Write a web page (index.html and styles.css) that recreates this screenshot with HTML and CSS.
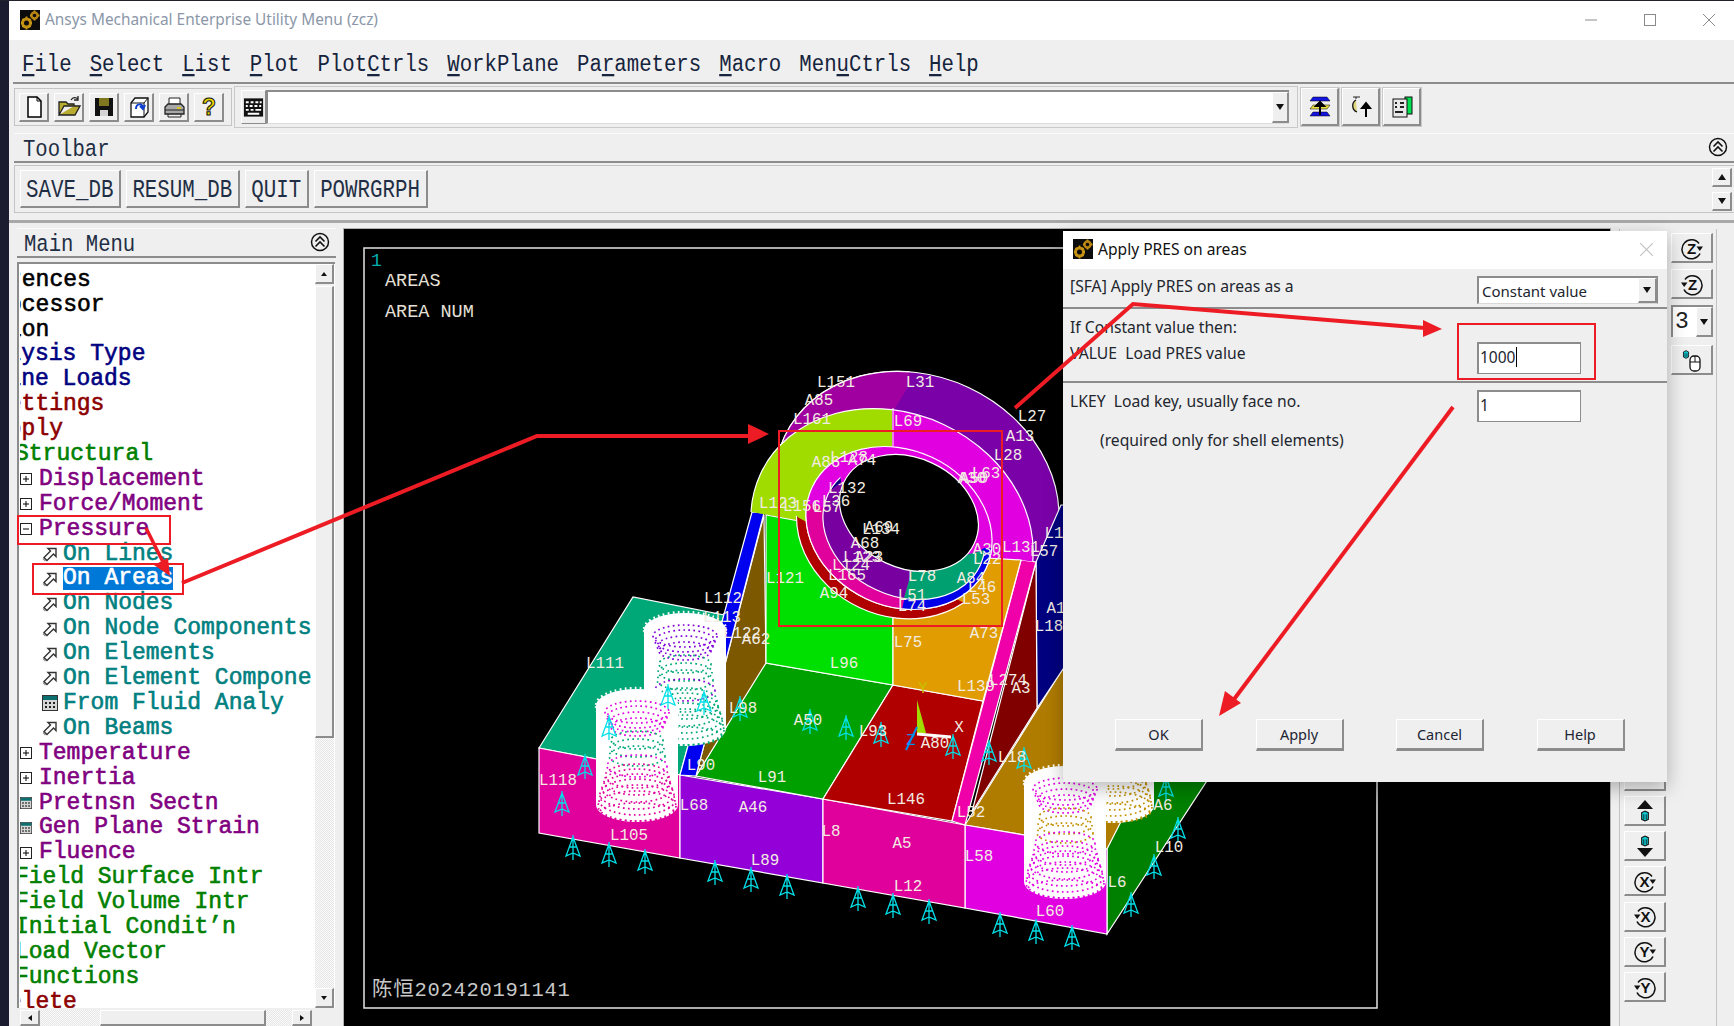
FILE: index.html
```html
<!DOCTYPE html>
<html lang="en">
<head>
<meta charset="utf-8">
<title>Ansys Mechanical Enterprise Utility Menu (zcz)</title>
<link rel="stylesheet" href="styles.css">
</head>
<body>
<svg class="defs" aria-hidden="true">
  <defs>
    <symbol id="gear" viewBox="0 0 20 20">
      <rect width="20" height="20" fill="#0c0c0c"/>
      <circle cx="6.500" cy="13" r="4" fill="none" stroke="#c08c10" stroke-width="3"/>
      <circle cx="14.500" cy="5.500" r="3" fill="none" stroke="#b88410" stroke-width="2.400"/>
      <path d="M6.500 6.500v2.500M6.500 17v2.500M1 13h2M10 13h2M2.500 9l1.500 1.500M9 15.500l1.500 1.500M2.500 17L4 15.500M9 10.500L10.500 9M14.500 0.500v1.500M14.500 9v1.500M10 5.500h1.500M18 5.500h1.500" stroke="#c89818" stroke-width="1.800"/>
    </symbol>
    <symbol id="collapse" viewBox="0 0 20 20">
      <circle cx="10" cy="10" r="8.500" fill="none" stroke="#111" stroke-width="1.500"/>
      <path d="M5.500 9.500L10 5l4.500 4.500M5.500 14.500L10 10l4.500 4.500" fill="none" stroke="#111" stroke-width="1.600"/>
    </symbol>
    <symbol id="plus" viewBox="0 0 12 12">
      <rect x="0.500" y="0.500" width="11" height="11" fill="#fff" stroke="#222"/>
      <path d="M3 6h6M6 3v6" stroke="#000"/>
    </symbol>
    <symbol id="minus" viewBox="0 0 12 12">
      <rect x="0.500" y="0.500" width="11" height="11" fill="#fff" stroke="#222"/>
      <path d="M3 6h6" stroke="#000"/>
    </symbol>
    <symbol id="arr" viewBox="0 0 16 16">
      <path d="M2 11.500L8.500 5L6 2.500H14V10.500L11.500 8L5 14.500Z" fill="#fff" stroke="#333" stroke-width="1.400"/>
      <path d="M1 12.500L3.500 15" stroke="#888" stroke-width="1.200"/>
    </symbol>
    <symbol id="form" viewBox="0 0 16 16">
      <rect x="0.500" y="0.500" width="15" height="15" fill="#d6d6d6" stroke="#333"/>
      <rect x="1" y="1" width="14" height="4" fill="#0d6e70"/>
      <path d="M3 8h2M7 8h2M11 8h2M3 12h2M7 12h2M11 12h2" stroke="#222" stroke-width="2"/>
    </symbol>
    <symbol id="ring-cw" viewBox="0 0 24 24">
      <path d="M19 7.500A9.500 9.500 0 1 0 20 17.500" fill="none" stroke="#111" stroke-width="1.500"/>
      <path d="M16.500 10.500H23L19.800 15Z" fill="#111"/>
    </symbol>
    <symbol id="ring-ccw" viewBox="0 0 24 24">
      <path d="M5 7.500A9.500 9.500 0 1 1 4 17.500" fill="none" stroke="#111" stroke-width="1.500"/>
      <path d="M7.500 10.500H1L4.200 15Z" fill="#111"/>
    </symbol>
    <symbol id="cube" viewBox="0 0 12 14">
      <path d="M2 3L6 1L10 3V11L6 13L2 11Z" fill="#10c8d0" stroke="#111" stroke-width="1.300"/>
      <path d="M4.500 5V11M7.500 5V11" stroke="#111"/>
    </symbol>
    <g id="cyl">
      <path class="cyl-body" d="M0 18A41 17 0 0 1 82 18V117A41 17 0 0 1 0 117Z"/>
      <ellipse class="ring-w" cx="41" cy="17" rx="41" ry="17"/>
      <ellipse class="ring-w" cx="41" cy="20" rx="41" ry="17"/>
      <ellipse class="ring-a" cx="41" cy="24" rx="32" ry="11"/>
      <ellipse class="ring-a" cx="41" cy="29" rx="30" ry="11"/>
      <ellipse class="ring-a" cx="41" cy="34" rx="28" ry="10"/>
      <ellipse class="ring-a" cx="41" cy="39" rx="26" ry="9"/>
      <ellipse class="ring-b" cx="41" cy="52" rx="26" ry="9"/>
      <ellipse class="ring-b" cx="41" cy="60" rx="27" ry="9"/>
      <ellipse class="ring-b" cx="41" cy="68" rx="28" ry="10"/>
      <ellipse class="ring-a" cx="41" cy="78" rx="30" ry="11"/>
      <ellipse class="ring-c" cx="41" cy="88" rx="32" ry="12"/>
      <ellipse class="ring-c" cx="41" cy="94" rx="33" ry="13"/>
      <ellipse class="ring-c" cx="41" cy="100" rx="35" ry="14"/>
      <ellipse class="ring-c" cx="41" cy="106" rx="37" ry="15"/>
      <ellipse class="ring-c" cx="41" cy="112" rx="38" ry="15"/>
      <ellipse class="ring-c" cx="41" cy="118" rx="39" ry="15"/>
      <ellipse class="ring-c" cx="41" cy="124" rx="37" ry="9"/>
    </g>
    <g id="prs">
      <path d="M0 -11L-7 8L0 5L7 8ZM0 -13V12M-3.500 -1L3.500 -1" class="prs-line"/>
    </g>
    <clipPath id="c-a85"><polygon points="700,340 912,340 910,385 895,410 700,600"/></clipPath>
    <clipPath id="c-lime"><polygon points="700,380 893,380 893,540 800,521 753,512 700,512"/></clipPath>
    <clipPath id="c-mag"><polygon points="893,380 1100,380 1100,562 1037,562 1022,560 987,558 893,540"/></clipPath>
    <clipPath id="c-red"><polygon points="780,500 800,518 975,608 1000,610 1000,660 780,660"/></clipPath>
    <clipPath id="c-pink"><polygon points="780,500 820,505 905,600 897,640 780,640"/></clipPath>
    <clipPath id="c-blue"><polygon points="905,600 897,640 1010,640 1010,550 985,548"/></clipPath>
    <clipPath id="c-purple"><polygon points="820,500 842,482 913,570 903,605 800,605"/></clipPath>
    <clipPath id="c-navy"><polygon points="815,500 820,500 842,482 840,465 815,465"/></clipPath>
    <clipPath id="c-teal"><polygon points="913,570 903,605 1000,620 985,550"/></clipPath>
  </defs>
</svg>

<div class="app">
  <div class="strip"></div>
  <div class="window">
    <header class="titlebar">
      <svg class="app-icon"><use href="#gear"/></svg>
      <span class="title-text">Ansys Mechanical Enterprise Utility Menu (zcz)</span>
      <span class="win-ctrls">
        <svg class="wc" viewBox="0 0 12 12"><path d="M0 6H12"/></svg>
        <svg class="wc" viewBox="0 0 12 12"><rect x="0.500" y="0.500" width="11" height="11"/></svg>
        <svg class="wc" viewBox="0 0 12 12"><path d="M0 0L12 12M12 0L0 12"/></svg>
      </span>
    </header>

    <nav class="menubar mono">
      <span><u>F</u>ile</span><span><u>S</u>elect</span><span><u>L</u>ist</span><span><u>P</u>lot</span><span>Plot<u>C</u>trls</span><span><u>W</u>orkPlane</span><span>Pa<u>r</u>ameters</span><span><u>M</u>acro</span><span>Men<u>u</u>Ctrls</span><span><u>H</u>elp</span>
    </nav>

    <div class="toolrow">
      <div class="toolgroup">
        <button class="tbtn"><svg class="ico" viewBox="0 0 24 24"><path d="M6 2H15L19 6V22H6Z" fill="#fff" stroke="#000" stroke-width="1.500"/><path d="M15 2V6H19" fill="none" stroke="#000"/></svg></button>
        <button class="tbtn"><svg class="ico" viewBox="0 0 24 24"><path d="M2 20V7H9L11 9H17V11H7L2 20H18L23 11H17" fill="#b8ac30" stroke="#222" stroke-width="1.300"/><path d="M14 5C16 2 19 2 21 4M21 1V5H17" fill="none" stroke="#222" stroke-width="1.300"/></svg></button>
        <button class="tbtn"><svg class="ico" viewBox="0 0 24 24"><rect x="3" y="3" width="18" height="18" fill="#111"/><rect x="7" y="3" width="10" height="8" fill="#807820"/><rect x="8" y="15" width="8" height="6" fill="#d4d4d4"/></svg></button>
        <button class="tbtn"><svg class="ico" viewBox="0 0 24 24"><path d="M4 8L8 3H21V17L17 22H4Z" fill="#fff" stroke="#111" stroke-width="1.300"/><path d="M4 8H17V22M17 8L21 3" fill="none" stroke="#111"/><path d="M9 14C9 8 16 8 16 13M13 11L16 14L18 10" fill="none" stroke="#1040d0" stroke-width="2"/></svg></button>
        <button class="tbtn"><svg class="ico" viewBox="0 0 24 24"><path d="M7 3H18V10H7Z" fill="#fff" stroke="#222"/><path d="M3 12L6 9H19L22 12V19H3Z" fill="#a8a8a8" stroke="#222" stroke-width="1.300"/><path d="M3 15H22M6 19V22H19V19" fill="none" stroke="#222"/><rect x="15" y="12" width="4" height="2" fill="#d8c820"/></svg></button>
        <button class="tbtn"><svg class="ico" viewBox="0 0 24 24"><text class="q-mark" x="12" y="20">?</text></svg></button>
      </div>
      <div class="cmdgroup">
        <div class="kbd"><svg class="ico" viewBox="0 0 24 24"><rect x="2" y="3" width="20" height="19" fill="#111"/><path d="M4 7h3M9 7h3M14 7h3M18.500 7h2M4 11h2M8 11h3M13 11h3M18 11h2M4 15h3M9 15h3M14 15h6M6 19h12" stroke="#fff" stroke-width="2"/></svg></div>
        <div class="cmd-input"><span class="drop"><i class="tri-d"></i></span></div>
      </div>
      <button class="tbtn wide"><svg class="ico" viewBox="0 0 24 24"><path d="M5 2H19L22 6H2Z" fill="#1414e0" stroke="#000" stroke-width="0.500"/><path d="M5 10H22L19 14H2Z" fill="#e8e040" stroke="#000" stroke-width="0.500"/><path d="M5 17H19L22 21H2Z" fill="#1414e0" stroke="#000" stroke-width="0.500"/><path d="M12 7V20M8 11L12 7L16 11H8Z" fill="#000" stroke="#000" stroke-width="2"/></svg></button>
      <button class="tbtn wide"><svg class="ico" viewBox="0 0 24 24"><path d="M4 2H11M7 2V4" stroke="#222"/><path d="M7 5C2 8 3 15 8 17" fill="#e0d880" stroke="#111" stroke-width="1.300"/><path d="M17 22V9M13 13L17 8L21 13Z" fill="#000" stroke="#000" stroke-width="2"/></svg></button>
      <button class="tbtn wide"><svg class="ico" viewBox="0 0 24 24"><rect x="15" y="2" width="7" height="17" fill="#00e050" stroke="#111"/><rect x="3" y="4" width="14" height="18" fill="#e8e8e8" stroke="#111"/><path d="M5 8h2M10 8h4M5 12h2M10 12h4M5 17h8" stroke="#222" stroke-width="2"/></svg></button>
    </div>

    <div class="bar-title">
      <span class="mono bar-label">Toolbar</span>
      <svg class="col-ic"><use href="#collapse"/></svg>
    </div>
    <div class="abbr-row">
      <button class="abbr mono"><span>SAVE_DB</span></button>
      <button class="abbr mono"><span>RESUM_DB</span></button>
      <button class="abbr mono"><span>QUIT</span></button>
      <button class="abbr mono"><span>POWRGRPH</span></button>
      <span class="abbr-scroll">
        <span class="mini"><i class="tri-u"></i></span>
        <span class="mini"><i class="tri-d"></i></span>
      </span>
    </div>

    <main class="work">
      <aside class="left">
        <div class="left-head">
          <span class="mono bar-label">Main Menu</span>
          <svg class="col-ic"><use href="#collapse"/></svg>
        </div>
        <div class="treebox">
          <div class="tree mono">
            <div class="row l0 k">Preferences</div>
            <div class="row l0 k">Preprocessor</div>
            <div class="row l0 k">Solution</div>
            <div class="row l1 n">Analysis Type</div>
            <div class="row l1 n">Define Loads</div>
            <div class="row l2 r">Settings</div>
            <div class="row l2 r">Apply</div>
            <div class="row l3 g">Structural</div>
            <div class="row l4 p"><svg class="box"><use href="#plus"/></svg>Displacement</div>
            <div class="row l4 p"><svg class="box"><use href="#plus"/></svg>Force/Moment</div>
            <div class="row l4 p"><svg class="box"><use href="#minus"/></svg>Pressure</div>
            <div class="row l5 t"><svg class="arr"><use href="#arr"/></svg>On Lines</div>
            <div class="row l5 t"><svg class="arr"><use href="#arr"/></svg><span class="sel">On Areas</span></div>
            <div class="row l5 t"><svg class="arr"><use href="#arr"/></svg>On Nodes</div>
            <div class="row l5 t"><svg class="arr"><use href="#arr"/></svg>On Node Components</div>
            <div class="row l5 t"><svg class="arr"><use href="#arr"/></svg>On Elements</div>
            <div class="row l5 t"><svg class="arr"><use href="#arr"/></svg>On Element Components</div>
            <div class="row l5 t"><svg class="arr"><use href="#form"/></svg>From Fluid Analy</div>
            <div class="row l5 t"><svg class="arr"><use href="#arr"/></svg>On Beams</div>
            <div class="row l4 p"><svg class="box"><use href="#plus"/></svg>Temperature</div>
            <div class="row l4 p"><svg class="box"><use href="#plus"/></svg>Inertia</div>
            <div class="row l4 p"><svg class="box"><use href="#form"/></svg>Pretnsn Sectn</div>
            <div class="row l4 p"><svg class="box"><use href="#form"/></svg>Gen Plane Strain</div>
            <div class="row l4 p"><svg class="box"><use href="#plus"/></svg>Fluence</div>
            <div class="row l3 g">Field Surface Intr</div>
            <div class="row l3 g">Field Volume Intr</div>
            <div class="row l3 g">Initial Condit’n</div>
            <div class="row l3 g">Load Vector</div>
            <div class="row l3 g">Functions</div>
            <div class="row l2 r">Delete</div>
          </div>
          <div class="vscroll">
            <span class="sb-btn"><i class="tri-u small"></i></span>
            <span class="sb-thumb-v"></span>
            <span class="sb-track"></span>
            <span class="sb-btn"><i class="tri-d small"></i></span>
          </div>
        </div>
        <div class="hscroll">
          <span class="sb-btn h"><i class="tri-l"></i></span>
          <span class="sb-track h-a"></span>
          <span class="sb-thumb-h"></span>
          <span class="sb-track h-b"></span>
          <span class="sb-btn h"><i class="tri-r"></i></span>
        </div>
      </aside>

      <section class="gfx">
        <svg class="plot" viewBox="345 229 1266 797">
          <rect x="365" y="248" width="1013" height="760" class="frame"/>
          <text class="t-one" x="372" y="266">1</text>
          <text class="t-head" x="386" y="286">AREAS</text>
          <text class="t-head" x="386" y="317">AREA NUM</text>
          <text class="t-sig" x="373" y="996">陈恒202420191141</text>

          <g class="edge">
            <polygon fill="#b07c00" points="966,825 1063,670 1210,700 1108,849"/>
            <polygon fill="#008000" points="1108,849 1108,934 1215,770 1215,640"/>
            <polygon fill="#e000e0" points="966,825 1108,849 1108,934 966,908"/>
            <polygon fill="#00a878" points="540,748 634,597 725,615 681,775"/>
            <polygon fill="#e0009c" points="540,748 681,775 681,858 540,833"/>
            <polygon fill="#9400d8" points="681,775 824,799 824,883 681,858"/>
            <polygon fill="#e0009c" points="824,799 966,825 966,908 824,883"/>
            <polygon fill="#00a000" points="766,663 894,685 824,799 697,776"/>
            <polygon fill="#b00000" points="894,685 984,701 953,821 824,799"/>
            <polygon fill="#7c5800" points="765,515 767,663 697,776"/>
            <polygon fill="#0000f0" points="681,775 697,776 765,513 753,512"/>

            <ellipse fill="#7a00a8" cx="918" cy="498" rx="146" ry="122" transform="rotate(25 918 498)"/>
            <g clip-path="url(#c-a85)"><ellipse fill="#a000a0" cx="918" cy="498" rx="146" ry="122" transform="rotate(25 918 498)"/></g>
            <polygon fill="#000080" points="1037,562 1062,505 1070,505 1070,660 1038,708"/>
            <polygon fill="#800000" points="1037,562 1038,708 973,812"/>
            <polygon fill="#f000a8" points="953,821 966,825 1037,562 1022,560"/>
            <g clip-path="url(#c-lime)"><ellipse fill="#a0dc00" cx="893" cy="535" rx="145" ry="122" transform="rotate(25 893 535)"/></g>
            <g clip-path="url(#c-mag)"><ellipse fill="#e000e0" cx="893" cy="535" rx="145" ry="122" transform="rotate(25 893 535)"/></g>
            <polygon fill="#00e000" points="767,515 800,521 894,560 894,685 767,663"/>
            <polygon fill="#e09c00" points="894,560 987,558 1022,560 984,701 894,685"/>
            <path d="M894 408V540" stroke="#fff"/>

            <g clip-path="url(#c-red)"><ellipse fill="#b00000" cx="898" cy="528" rx="103" ry="88" transform="rotate(25 898 528)"/></g>
            <ellipse fill="#e000e0" cx="900" cy="528" rx="96" ry="78" transform="rotate(25 900 528)"/>
            <g clip-path="url(#c-pink)"><ellipse fill="#e0009c" cx="900" cy="528" rx="96" ry="78" transform="rotate(25 900 528)"/></g>
            <g clip-path="url(#c-blue)"><ellipse fill="#0000e8" cx="900" cy="528" rx="96" ry="78" transform="rotate(25 900 528)"/></g>
            <g clip-path="url(#c-purple)"><ellipse fill="#7800a0" cx="905" cy="530" rx="84" ry="66" transform="rotate(25 905 530)"/></g>
            <g clip-path="url(#c-navy)"><ellipse fill="#000080" cx="905" cy="530" rx="84" ry="66" transform="rotate(25 905 530)"/></g>
            <g clip-path="url(#c-teal)"><ellipse fill="#00a070" cx="905" cy="530" rx="84" ry="66" transform="rotate(25 905 530)"/></g>
            <ellipse fill="#000" cx="910" cy="513" rx="72" ry="55" transform="rotate(25 910 513)"/>
          </g>

          <use href="#cyl" x="645" y="612" class="cy1"/>
          <use href="#cyl" x="597" y="688" class="cy2"/>
          <use href="#cyl" x="1073" y="689" class="cy4"/>
          <use href="#cyl" x="1025" y="765" class="cy3"/>

          <g class="triad">
            <polygon fill="#a0dc00" points="918,700 918,733 927,733"/>
            <path d="M918 734L952 737" stroke="#fff" stroke-width="3"/>
            <path d="M918 727L907 750" stroke="#0090f0" stroke-width="2"/>
          </g>
          <text class="lb yl" x="924" y="693">Y</text>
          <text class="lb" x="960" y="732">X</text>
          <text class="lb bl" x="912" y="745">Z</text>

          <g class="pr">
            <use href="#prs" x="574" y="848"/><use href="#prs" x="610" y="855"/><use href="#prs" x="646" y="862"/>
            <use href="#prs" x="716" y="873"/><use href="#prs" x="752" y="880"/><use href="#prs" x="788" y="887"/>
            <use href="#prs" x="859" y="899"/><use href="#prs" x="894" y="906"/><use href="#prs" x="930" y="912"/>
            <use href="#prs" x="1001" y="925"/><use href="#prs" x="1037" y="932"/><use href="#prs" x="1073" y="938"/>
            <use href="#prs" x="1132" y="905"/><use href="#prs" x="1155" y="867"/><use href="#prs" x="1179" y="830"/><use href="#prs" x="1167" y="788"/>
            <use href="#prs" x="586" y="767"/><use href="#prs" x="563" y="804"/><use href="#prs" x="610" y="728"/><use href="#prs" x="669" y="697"/><use href="#prs" x="705" y="703"/><use href="#prs" x="741" y="709"/>
            <use href="#prs" x="811" y="722"/><use href="#prs" x="847" y="728"/><use href="#prs" x="882" y="735"/><use href="#prs" x="954" y="747"/><use href="#prs" x="990" y="753"/><use href="#prs" x="1025" y="760"/>
          </g>

          <g class="lbs">
            <text x="837" y="387">L151</text><text x="921" y="387">L31</text><text x="820" y="405">A85</text><text x="813" y="424">L161</text>
            <text x="909" y="426">L69</text><text x="1033" y="421">L27</text><text x="1021" y="441">A13</text><text x="1009" y="460">L28</text>
            <text x="827" y="467">A86</text><text x="850" y="462">L128</text><text x="863" y="465">A74</text><text x="987" y="478">L63</text>
            <text x="973" y="483">A30</text><text x="975" y="483">A50</text><text x="848" y="493">L132</text><text x="779" y="508">L123</text>
            <text x="803" y="511">L156</text><text x="828" y="512">L57</text><text x="837" y="506">L36</text><text x="880" y="532">A69</text>
            <text x="882" y="534">L134</text><text x="866" y="548">A68</text><text x="863" y="562">L123</text><text x="870" y="562">A23</text>
            <text x="852" y="570">L124</text><text x="786" y="583">L121</text><text x="923" y="581">L78</text><text x="848" y="580">L165</text>
            <text x="835" y="598">A94</text><text x="913" y="600">L51</text><text x="913" y="611">L74</text><text x="977" y="604">L53</text>
            <text x="983" y="592">L46</text><text x="972" y="583">A84</text><text x="988" y="554">A30</text><text x="1022" y="552">L131</text>
            <text x="1045" y="556">L57</text><text x="988" y="564">L22</text><text x="985" y="638">A73</text><text x="909" y="647">L75</text>
            <text x="1050" y="631">L18</text><text x="1057" y="613">A1</text><text x="1055" y="538">L1</text><text x="724" y="603">L112</text>
            <text x="723" y="622">L113</text><text x="743" y="638">L122</text><text x="757" y="644">A62</text><text x="606" y="668">L111</text>
            <text x="845" y="668">L96</text><text x="744" y="713">L98</text><text x="809" y="725">A50</text><text x="874" y="736">L93</text>
            <text x="977" y="691">L139</text><text x="1009" y="685">L274</text><text x="1022" y="693">A3</text><text x="936" y="748">A80</text>
            <text x="1013" y="762">L18</text><text x="702" y="770">L90</text><text x="773" y="782">L91</text><text x="559" y="785">L118</text>
            <text x="695" y="810">L68</text><text x="754" y="812">A46</text><text x="907" y="804">L146</text><text x="972" y="817">L52</text>
            <text x="832" y="836">L8</text><text x="980" y="861">L58</text><text x="630" y="840">L105</text><text x="903" y="848">A5</text>
            <text x="766" y="865">L89</text><text x="909" y="891">L12</text><text x="1051" y="916">L60</text><text x="1118" y="887">L6</text>
            <text x="1170" y="852">L10</text><text x="1164" y="810">A6</text>
          </g>
        </svg>
      </section>

      <aside class="side">
        <div class="side-col a">
          <button class="sbtn"><svg class="sico" viewBox="0 0 24 24"><use href="#cube" x="6" y="1" width="12" height="14"/></svg></button>
          <button class="sbtn"><svg class="sico" viewBox="0 0 24 24"><path d="M12 1L20 10H4Z" fill="#111"/><use href="#cube" x="7" y="11" width="10" height="12"/></svg></button>
          <button class="sbtn"><svg class="sico" viewBox="0 0 24 24"><use href="#cube" x="7" y="1" width="10" height="12"/><path d="M12 23L20 14H4Z" fill="#111"/></svg></button>
          <button class="sbtn"><svg class="sico" viewBox="0 0 24 24"><use href="#ring-cw"/><text class="rl" x="11.500" y="17.500">X</text></svg></button>
          <button class="sbtn"><svg class="sico" viewBox="0 0 24 24"><use href="#ring-ccw"/><text class="rl" x="12.500" y="17.500">X</text></svg></button>
          <button class="sbtn"><svg class="sico" viewBox="0 0 24 24"><use href="#ring-cw"/><text class="rl" x="11.500" y="17.500">Y</text></svg></button>
          <button class="sbtn"><svg class="sico" viewBox="0 0 24 24"><use href="#ring-ccw"/><text class="rl" x="12.500" y="17.500">Y</text></svg></button>
        </div>
        <div class="side-col b">
          <button class="sbtn"><svg class="sico" viewBox="0 0 24 24"><use href="#ring-cw"/><text class="rl" x="11.500" y="17.500">Z</text></svg></button>
          <button class="sbtn"><svg class="sico" viewBox="0 0 24 24"><use href="#ring-ccw"/><text class="rl" x="12.500" y="17.500">Z</text></svg></button>
          <div class="rate"><span class="rate-val mono">3</span><span class="rate-drop"><i class="tri-d"></i></span></div>
          <button class="sbtn"><svg class="sico" viewBox="0 0 24 24"><use href="#cube" x="2" y="2" width="8" height="9"/><rect x="10" y="8" width="10" height="15" rx="4" fill="#fff" stroke="#111" stroke-width="1.300"/><path d="M10 14H20M15 8V14" stroke="#111"/></svg></button>
        </div>
      </aside>
    </main>
  </div>

  <div class="dialog">
    <div class="dlg-title">
      <svg class="dlg-icon"><use href="#gear"/></svg>
      <span>Apply PRES on areas</span>
      <svg class="dlg-close" viewBox="0 0 12 12"><path d="M0 0L12 12M12 0L0 12"/></svg>
    </div>
    <div class="dlg-sec s1">
      <div class="dl-label top">[SFA] Apply PRES on areas as a</div>
      <div class="combo"><span class="combo-text">Constant value</span><span class="drop c"><i class="tri-d"></i></span></div>
    </div>
    <div class="dlg-sec s2">
      <div class="s2-text">
        <div class="dl-label">If Constant value then:</div>
        <div class="dl-label v">VALUE&nbsp; Load PRES value</div>
      </div>
      <div class="field f-val"><span class="caret">1000</span></div>
    </div>
    <div class="dlg-sec s3">
      <div class="s3-text">
        <div class="dl-label">LKEY&nbsp; Load key, usually face no.</div>
        <div class="dl-label note">(required only for shell elements)</div>
      </div>
      <div class="field f-key">1</div>
    </div>
    <div class="dlg-btns">
      <button class="dbtn">OK</button>
      <button class="dbtn">Apply</button>
      <button class="dbtn">Cancel</button>
      <button class="dbtn">Help</button>
    </div>
  </div>

  <svg class="marks" viewBox="0 0 1734 1026">
    <rect x="18" y="516" width="152" height="28"/>
    <rect x="33" y="564" width="150" height="30"/>
    <rect x="779" y="431" width="223" height="195"/>
    <rect x="1458" y="324" width="137" height="55"/>
    <path d="M146 528L165 566"/>
    <polygon points="170,576 154,565 168,558"/>
    <path class="th" d="M182 583L537 436H750"/>
    <polygon points="769,434 748,424 748,444"/>
    <path class="th" d="M1015 408L1133 304L1425 328"/>
    <polygon points="1442,329 1423,320 1423,337"/>
    <path class="th" d="M1453 407L1232 702"/>
    <polygon points="1219,716 1225,691 1241,703"/>
  </svg>
</div>
</body>
</html>
```

FILE: styles.css
```css
* { box-sizing: border-box; }
html, body { margin: 0; padding: 0; height: 100%; overflow: hidden; }
body { font-family: "Noto Sans", "Liberation Sans", sans-serif; background: #1b1c30; }
.defs { position: absolute; width: 0; height: 0; }
.mono { font-family: "Liberation Mono", "Noto Sans CJK SC", monospace; }
button { font: inherit; margin: 0; padding: 0; color: inherit; }

.app { position: relative; width: 1734px; height: 1026px; display: flex; overflow: hidden; padding-top: 1px; background: #22222e; }
.strip { width: 9px; flex: none; background: #1b1c30; }
.window { flex: 1; display: flex; flex-direction: column; background: #efefef; min-width: 0; }

.titlebar { height: 39px; flex: none; background: #fff; display: flex; align-items: center; padding: 0 0 2px 11px; }
.app-icon { width: 20px; height: 20px; flex: none; margin-right: 5px; }
.title-text { font-size: 15.400px; color: #8b97a8; white-space: nowrap; }
.win-ctrls { margin-left: auto; display: flex; gap: 47px; padding-right: 19px; align-items: center; }
.wc { width: 12px; height: 12px; fill: none; stroke: #8a8a8a; stroke-width: 1; }

.menubar { height: 44px; flex: none; margin-left: 4px; display: flex; align-items: center; gap: 18px; padding: 6px 0 0 9px; font-size: 20.700px; color: #16233c; border-bottom: 2px solid #8c8c8c; white-space: nowrap; }
.menubar span { transform: scaleY(1.12); }
.menubar u { text-underline-offset: 3px; text-decoration-thickness: 2px; }

.toolrow { height: 46px; flex: none; display: flex; align-items: center; padding-left: 5px; }
.toolgroup { display: flex; gap: 5px; height: 38px; padding: 4px 4px; border: 1px solid #c4c4c4; width: 218px; }
.tbtn { width: 30px; height: 29px; flex: none; display: flex; align-items: center; justify-content: center; background: #efefef; border: 1px solid; border-color: #fff #8c8c8c #8c8c8c #fff; border-width: 1px 2px 2px 1px; }
.tbtn.wide { width: 38px; height: 38px; margin-right: 3px; outline: 1px solid #c9c9c9; }
.ico { width: 24px; height: 24px; }
.q-mark { font: 700 23px "Liberation Sans", sans-serif; fill: #e8d800; stroke: #111; stroke-width: 1; text-anchor: middle; }
.cmdgroup { display: flex; margin-left: 2px; margin-right: 3px; width: 1064px; height: 42px; padding: 3px 8px 3px 6px; border: 1px solid #c9c9c9; }
.kbd { width: 25px; display: flex; align-items: center; justify-content: center; border: 1px solid; border-color: #fff #8c8c8c #8c8c8c #fff; }
.cmd-input { flex: 1; display: flex; justify-content: flex-end; background: #fff; border-top: 2px solid #8c8c8c; border-left: 2px solid #8c8c8c; border-bottom: 1px solid #ddd; }
.drop { width: 17px; display: flex; align-items: center; justify-content: center; background: #efefef; border: 1px solid; border-color: #fff #8c8c8c #8c8c8c #fff; border-width: 1px 2px 2px 1px; }

.tri-d, .tri-u, .tri-l, .tri-r { display: block; width: 0; height: 0; border-style: solid; border-color: transparent; }
.tri-d { border-width: 6px 4.500px 0; border-top-color: #111; }
.tri-u { border-width: 0 4.500px 6px; border-bottom-color: #111; }
.tri-d.small { border-width: 4px 3.500px 0; border-top-color: #111; }
.tri-u.small { border-width: 0 3.500px 4px; border-bottom-color: #111; }
.tri-l { border-width: 3.500px 4px 3.500px 0; border-right-color: #111; }
.tri-r { border-width: 3.500px 0 3.500px 4px; border-left-color: #111; }

.bar-title { height: 30px; flex: none; margin: 3px 0 0 5px; display: flex; align-items: center; justify-content: space-between; padding: 3px 6px 0 9px; border-bottom: 2px solid #8c8c8c; border-top: 1px solid #fafafa; }
.bar-title .col-ic { margin-top: -5px; }
.bar-label { font-size: 20.600px; color: #1f2e44; white-space: nowrap; transform: scaleY(1.18); display: inline-block; }
.col-ic { width: 20px; height: 20px; flex: none; }
.abbr-row { height: 48px; flex: none; margin: 2px 0 0 5px; display: flex; align-items: center; gap: 5px; padding: 0 2px 0 5px; border: 1px solid #c4c4c4; border-right: 0; }
.abbr { height: 38px; padding: 3px 6px 0 5px; font-size: 20.800px; color: #1f2e44; background: #efefef; border: 1px solid; border-color: #fff #8c8c8c #8c8c8c #fff; border-width: 1px 2px 2px 1px; white-space: nowrap; }
.abbr span { display: inline-block; transform: scaleY(1.25); }
.abbr-scroll { margin-left: auto; display: flex; flex-direction: column; gap: 5px; }
.mini { width: 20px; height: 19px; display: flex; align-items: center; justify-content: center; background: #efefef; border: 1px solid; border-color: #fff #8c8c8c #8c8c8c #fff; border-width: 1px 2px 2px 1px; }

.work { flex: 1; min-height: 0; margin-top: 7px; border-top: 3px solid #a8a8a8; display: flex; padding-left: 6px; padding-top: 7px; }
.left { width: 325px; flex: none; display: flex; flex-direction: column; padding-left: 2px; margin-top: -2px; }
.left-head { height: 30px; flex: none; display: flex; align-items: center; justify-content: space-between; padding: 4px 6px 0 7px; border-bottom: 2px solid #8c8c8c; border-top: 1px solid #fafafa; width: 319px; }
.left-head .col-ic { margin-top: -6px; }
.treebox { height: 746px; flex: none; margin-top: 4px; width: 318px; display: flex; gap: 4px; background: #fff; border-top: 2px solid #8c8c8c; border-left: 2px solid #8c8c8c; padding-left: 1px; }
.tree { width: 291px; flex: none; overflow: hidden; padding-top: 3.800px; font-size: 23px; font-weight: 400; -webkit-text-stroke: 0.600px currentColor; }
.row { height: 24.900px; line-height: 24.900px; white-space: nowrap; display: flex; align-items: center; }
.l0 { margin-left: -81px; }
.l1 { margin-left: -54px; }
.l2 { margin-left: -26px; }
.l3 { margin-left: -5px; }
.l4 { margin-left: 0; }
.l5 { margin-left: 22px; }
.k { color: #000; }
.n { color: #000080; }
.r { color: #8c0000; }
.g { color: #008000; }
.p { color: #800080; }
.t { color: #008080; }
.sel { background: #0078d7; color: #fff; line-height: 23px; }
.box { width: 12px; height: 12px; margin-right: 7px; flex: none; }
.arr { width: 16px; height: 16px; margin-right: 5px; flex: none; }
.vscroll { width: 19px; flex: none; display: flex; flex-direction: column; background: #efefef; }
.sb-btn { height: 20px; flex: none; display: flex; align-items: center; justify-content: center; background: #efefef; border: 1px solid; border-color: #fff #8c8c8c #8c8c8c #fff; border-width: 1px 2px 2px 1px; }
.sb-btn.h { height: 16px; width: 20px; }
.sb-thumb-v { height: 452px; flex: none; margin-top: 2px; background: #efefef; border: 1px solid; border-color: #fff #8c8c8c #8c8c8c #fff; border-width: 1px 2px 2px 1px; }
.sb-track { flex: 1; background: repeating-conic-gradient(#e6e6e6 0 25%, #fafafa 0 50%) 0 0 / 2px 2px; }
.hscroll { height: 16px; flex: none; margin: 2px 0 0 3px; width: 291px; display: flex; }
.sb-track.h-a { flex: none; width: 60px; }
.sb-track.h-b { flex: none; width: 26px; }
.sb-thumb-h { width: 166px; flex: none; background: #efefef; border: 1px solid; border-color: #fff #8c8c8c #8c8c8c #fff; border-width: 1px 2px 2px 1px; }

.gfx { width: 1266px; flex: none; margin-left: 4px; margin-top: -1px; background: #000; outline: 1px solid #b0b0b0; }
.plot { display: block; width: 1266px; height: 797px; }
.frame { fill: none; stroke: #e4e4e4; stroke-width: 1.500; }
.t-one { font: 18px "Liberation Mono", monospace; fill: #00b0b0; }
.t-head { font: 18.500px "Liberation Mono", monospace; fill: #e6e0d8; }
.t-sig { font: 20.500px "Liberation Mono", "Noto Sans CJK SC", monospace; fill: #c8c8c8; letter-spacing: 0.700px; }
.edge polygon, .edge ellipse { stroke: #fff; stroke-width: 1.200; }
.cyl-body { fill: #fff; }
.ring-w, .ring-a, .ring-b, .ring-c { fill: none; stroke-width: 1.700; stroke-dasharray: 1.700 3.300; }
.ring-w { stroke: #ffffff; stroke-width: 2.400; }
.ring-a { stroke: var(--a); }
.ring-b { stroke: var(--b); }
.ring-c { stroke: var(--c); }
.cy1 { --a: #8000d8; --b: #00a878; --c: #00a878; }
.cy2 { --a: #e000e0; --b: #00a878; --c: #e0009c; }
.cy3 { --a: #e000e0; --b: #c09000; --c: #e000e0; }
.cy4 { --a: #c09000; --b: #c09000; --c: #c09000; }
.prs-line { fill: none; stroke: #00e0e8; stroke-width: 1.300; }
.lbs text, .lb { font: 15.800px "Liberation Mono", monospace; fill: #f2ece2; text-anchor: middle; }
.lb.yl { fill: #c8c000; }
.lb.bl { fill: #0090f0; }

.side { width: 98px; flex: none; margin-left: 9px; margin-top: -1px; display: flex; gap: 5px; border: 1px solid #c4c4c4; border-width: 0 1px 0 1px; padding-left: 4px; }
.side-col { width: 42px; flex: none; display: flex; flex-direction: column; gap: 5.200px; }
.side-col.a { justify-content: flex-end; padding-bottom: 24px; }
.side-col.b { padding-top: 4px; gap: 6px; }
.sbtn { width: 42px; height: 30px; flex: none; display: flex; align-items: center; justify-content: center; background: #efefef; border: 1px solid; border-color: #fff #8c8c8c #8c8c8c #fff; border-width: 1px 2px 2px 1px; }
.sico { width: 24px; height: 24px; }
.rl { font: 700 15px "Liberation Sans", sans-serif; fill: #111; text-anchor: middle; }
.rate { width: 42px; height: 32px; flex: none; display: flex; background: #fff; border-top: 2px solid #8c8c8c; border-left: 2px solid #8c8c8c; margin-bottom: 2px; }
.rate-val { flex: 1; font-size: 23px; line-height: 30px; padding-left: 2px; color: #222; }
.rate-drop { width: 17px; display: flex; align-items: center; justify-content: center; background: #efefef; border: 1px solid; border-color: #fff #8c8c8c #8c8c8c #fff; border-width: 1px 2px 2px 1px; }

.dialog { position: absolute; left: 1063px; top: 231px; width: 604px; height: 551px; background: #efefef; display: flex; flex-direction: column; box-shadow: 0 6px 18px rgba(0,0,0,.28); font-size: 15.700px; color: #22262e; }
.dlg-title { height: 38px; flex: none; background: #fff; display: flex; align-items: center; padding: 0 14px 2px 10px; font-size: 15.600px; color: #111; }
.dlg-icon { width: 20px; height: 20px; flex: none; margin-right: 5px; }
.dlg-close { width: 13px; height: 13px; margin-left: auto; fill: none; stroke: #c0c0c0; stroke-width: 1; }
.dlg-sec { display: grid; grid-template-columns: 407px 1fr; padding-left: 7px; flex: none; }
.s1 { height: 40px; border-bottom: 2px solid #8c8c8c; padding-top: 7px; }
.s2 { height: 74px; border-bottom: 2px solid #8c8c8c; padding-top: 33px; }
.s3 { padding-top: 8px; }
.dl-label { line-height: 20px; white-space: nowrap; }
.dl-label.top { margin-top: 0; }
.s2-text { margin-top: -25px; }
.dl-label.v { margin-top: 6px; }
.dl-label.note { margin: 19px 0 0 30px; }
.combo { width: 181px; height: 28px; display: flex; background: #fff; border: 2px solid #8c8c8c; border-right-width: 1px; border-bottom: 1px solid #d8d8d8; justify-content: space-between; align-items: stretch; font-size: 15px; }
.combo-text { padding-left: 3px; line-height: 26px; }
.drop.c { width: 19px; }
.field { width: 104px; height: 32px; background: #fff; border: 1px solid #8c8c8c; border-width: 2px 1px 1px 2px; padding-left: 1px; line-height: 27px; font-size: 15.500px; }
.f-key { margin-top: -1px; }
.caret { border-right: 1px solid #000; padding-right: 1px; display: inline-block; line-height: 20px; }
.dlg-btns { margin-top: auto; height: 63px; flex: none; display: flex; padding-left: 52px; gap: 52.500px; }
.dbtn { width: 88px; height: 32px; background: #efefef; border: 1px solid; border-color: #fff #8c8c8c #8c8c8c #fff; border-width: 1px 2px 3px 1px; color: #1c2534; font-size: 14.500px; }

.marks { position: absolute; left: 0; top: 0; width: 1734px; height: 1026px; pointer-events: none; }
.marks rect { fill: none; stroke: #ed1c24; stroke-width: 2; }
.marks path { fill: none; stroke: #ed1c24; stroke-width: 3.500; }
.marks path.th { stroke-width: 4; }
.marks polygon { fill: #ed1c24; }
```
